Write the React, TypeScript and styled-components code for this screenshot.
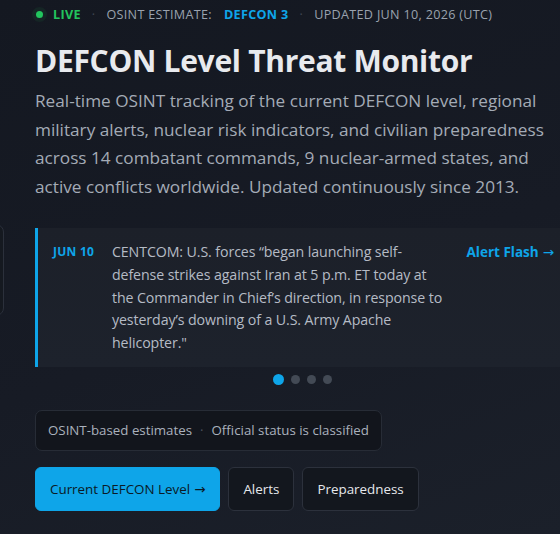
import React from 'react'
import styled, { createGlobalStyle } from 'styled-components'

/*
 * STYLES
 */

const GlobalStyle = createGlobalStyle`
  html, body {
    margin: 0;
    padding: 0;
    background: #161a23;
    overflow: hidden;
  }
  body {
    font-family: 'Open Sans', 'Noto Sans', sans-serif;
    -webkit-font-smoothing: antialiased;
  }
`

const Hero = styled.section`
  position: relative;
  width: 560px;
  height: 534px;
  box-sizing: border-box;
  padding: 4px 0 0 35px;
  background: linear-gradient(160deg, #141821 0%, #171b25 55%, #1b202a 100%);
  overflow: hidden;
`

const StatusBar = styled.div`
  display: flex;
  align-items: center;
  height: 20px;
  font-size: 12.6px;
  letter-spacing: 0.025em;
  text-transform: uppercase;
  color: #9aa2ae;
`

const LiveDot = styled.span`
  width: 7px;
  height: 7px;
  border-radius: 50%;
  background: #22c55e;
  box-shadow: 0 0 0 4px rgba(34, 197, 94, 0.08);
  margin: 0 10px 0 1px;
`

const Live = styled.span`
  color: #22c55e;
  font-weight: 700;
`

const Sep = styled.span`
  color: #3f4652;
  margin: 0 11px;
`

const Accent = styled.span`
  color: #0ea5e9;
  font-weight: 700;
  margin-left: 12px;
`

const Title = styled.h1`
  margin: 18px 0 0;
  font-size: 30px;
  line-height: 38px;
  font-weight: 700;
  color: #e8eaee;
  letter-spacing: -0.01em;
`

const Lead = styled.p`
  margin: 7px 0 0;
  width: 520px;
  font-size: 17.2px;
  line-height: 28.6px;
  color: #a4abb6;
`

const Carousel = styled.div`
  position: relative;
  margin-top: 27px;
`

const NavButton = styled.div`
  position: absolute;
  left: -113px;
  top: -4px;
  width: 80px;
  height: 90px;
  border: 1px solid #2b303b;
  border-radius: 8px;
  background: #151920;
`

const AlertCard = styled.article`
  display: grid;
  grid-template-columns: 59px 331px 1fr;
  align-items: start;
  width: 535px;
  box-sizing: border-box;
  padding: 13px 16px 12px 15px;
  border-left: 3px solid #0ea5e9;
  background: linear-gradient(180deg, #1c2029 0%, #1d222c 100%);
`

const AlertDate = styled.span`
  font-size: 12px;
  font-weight: 700;
  letter-spacing: 0.02em;
  color: #0ea5e9;
  line-height: 22px;
`

const AlertText = styled.p`
  margin: 0;
  font-size: 14.2px;
  letter-spacing: -0.1px;
  line-height: 22.7px;
  color: #b5bbc5;
`

const AlertLink = styled.a`
  justify-self: end;
  font-size: 13.5px;
  font-weight: 700;
  line-height: 22px;
  color: #0ea5e9;
  text-decoration: none;
  white-space: nowrap;
`

const Dots = styled.div`
  display: flex;
  justify-content: center;
  align-items: center;
  gap: 7px;
  width: 535px;
  margin-top: 7px;
  height: 11px;
`

const Dot = styled.span<{ $active?: boolean }>`
  width: ${(p) => (p.$active ? 11 : 9)}px;
  height: ${(p) => (p.$active ? 11 : 9)}px;
  border-radius: 50%;
  background: ${(p) => (p.$active ? '#0ea5e9' : '#434a55')};
`

const Notice = styled.div`
  display: inline-flex;
  align-items: center;
  margin-top: 25px;
  height: 41px;
  box-sizing: border-box;
  padding: 0 12px;
  border: 1px solid #272c36;
  border-radius: 7px;
  background: #12151c;
  font-size: 13.3px;
  color: #aab1bc;
`

const NoticeSep = styled.span`
  color: #4a515c;
  margin: 0 8px;
`

const Actions = styled.div`
  display: flex;
  gap: 8px;
  margin-top: 16px;
`

const Button = styled.button<{ $primary?: boolean }>`
  height: 44px;
  padding: 0 14px;
  border-radius: 6px;
  font-family: inherit;
  font-size: 13.4px;
  cursor: pointer;
  border: 1px solid ${(p) => (p.$primary ? '#0ea5e9' : '#2c313c')};
  background: ${(p) => (p.$primary ? '#0ea5e9' : '#13171e')};
  color: ${(p) => (p.$primary ? '#0b1a26' : '#e6e8ec')};
`

const Arrow = styled.span`
  font-family: 'DejaVu Sans', sans-serif;
  font-weight: 400;
  margin-left: 4px;
`

/*
 * COMPONENT
 */

const slides = [0, 1, 2, 3]

const App = () => {
  return (
    <>
      <GlobalStyle />
      <Hero>
        <StatusBar>
          <LiveDot />
          <Live>Live</Live>
          <Sep>·</Sep>
          OSINT Estimate:
          <Accent>DEFCON 3</Accent>
          <Sep>·</Sep>
          Updated Jun 10, 2026 (UTC)
        </StatusBar>
        <Title>DEFCON Level Threat Monitor</Title>
        <Lead>
          Real-time OSINT tracking of the current DEFCON level, regional
          military alerts, nuclear risk indicators, and civilian preparedness
          across 14 combatant commands, 9 nuclear-armed states, and active
          conflicts worldwide. Updated continuously since 2013.
        </Lead>
        <Carousel>
          <NavButton />
          <AlertCard>
            <AlertDate>JUN 10</AlertDate>
            <AlertText>
              CENTCOM: U.S. forces “began launching self-defense strikes
              against Iran at 5 p.m. ET today at the Commander in Chief’s
              direction, in response to yesterday’s downing of a U.S. Army
              Apache helicopter."
            </AlertText>
            <AlertLink href="#">
              Alert Flash<Arrow>→</Arrow>
            </AlertLink>
          </AlertCard>
          <Dots>
            {slides.map((i) => (
              <Dot key={i} $active={i === 0} />
            ))}
          </Dots>
        </Carousel>
        <Notice>
          OSINT-based estimates<NoticeSep>·</NoticeSep>Official status is
          classified
        </Notice>
        <Actions>
          <Button $primary>
            Current DEFCON Level<Arrow>→</Arrow>
          </Button>
          <Button>Alerts</Button>
          <Button>Preparedness</Button>
        </Actions>
      </Hero>
    </>
  )
}

export default App
